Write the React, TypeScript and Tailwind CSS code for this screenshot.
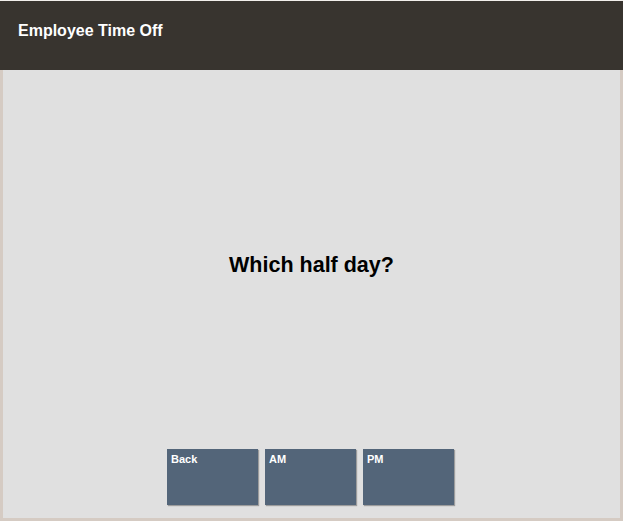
export default function App() {
  const buttons = ['Back', 'AM', 'PM']

  return (
    <div className="flex h-[521px] w-[623px] flex-col bg-[#f2efec] font-['Liberation_Sans',Arial,sans-serif]">
      {/* Header */}
      <header className="mt-px h-[69px] bg-[#38342f] pl-[18px] pt-[20px]">
        <h1 className="text-[16px] font-bold leading-[19px] text-white">Employee Time Off</h1>
      </header>

      {/* Body */}
      <main className="flex flex-1 flex-col border-x-[3px] border-b-[3px] border-[#d5cbc3] bg-[#e0e0e0]">
        <p className="pt-[181px] text-center text-[21.5px] font-bold leading-[28px] text-black">
          Which half day?
        </p>

        <div className="mt-[170px] flex justify-center gap-[7px] pr-[2px]">
          {buttons.map((label) => (
            <button
              key={label}
              className="flex h-[56px] w-[91px] items-start bg-[#536579] px-[4px] pt-[3px] text-left text-[11px] font-bold leading-[14px] text-white shadow-[1px_1px_1px_rgba(0,0,0,0.3)]"
            >
              {label}
            </button>
          ))}
        </div>
      </main>
    </div>
  )
}
